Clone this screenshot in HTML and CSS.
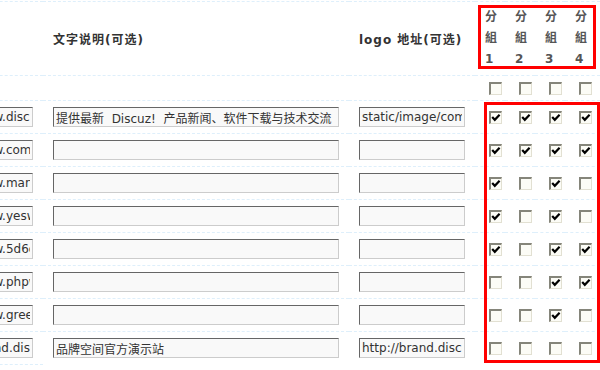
FILE: index.html
```html
<!DOCTYPE html>
<html lang="zh-CN">
<head>
  <meta charset="UTF-8">
  <meta name="viewport" content="width=device-width, initial-scale=1.0">
  <title>友情链接</title>
  <link rel="stylesheet" href="styles.css">
</head>
<body>
  <div class="page">
    <table class="tb">
      <tr class="head">
        <th></th>
        <th>文字说明(可选)</th>
        <th>logo 地址(可选)</th>
        <th class="grp">分<br>組<br>1</th>
        <th class="grp">分<br>組<br>2</th>
        <th class="grp">分<br>組<br>3</th>
        <th class="grp last">分<br>組<br>4</th>
      </tr>
      <tr class="all">
        <td></td><td></td><td></td>
        <td class="grp"><input type="checkbox" class="cb"></td>
        <td class="grp"><input type="checkbox" class="cb"></td>
        <td class="grp"><input type="checkbox" class="cb"></td>
        <td class="grp last"><input type="checkbox" class="cb"></td>
      </tr>
      <tr>
        <td><input class="txt url" value="http://www.discuz.net"></td>
        <td><input class="txt desc" value="提供最新  Discuz!  产品新闻、软件下载与技术交流"></td>
        <td><input class="txt logo" value="static/image/common/logo_88_31.gif"></td>
        <td class="grp"><input type="checkbox" class="cb" checked></td>
        <td class="grp"><input type="checkbox" class="cb" checked></td>
        <td class="grp"><input type="checkbox" class="cb" checked></td>
        <td class="grp last"><input type="checkbox" class="cb" checked></td>
      </tr>
      <tr>
        <td><input class="txt url" value="http://www.comsenz.com"></td>
        <td><input class="txt desc" value=""></td>
        <td><input class="txt logo" value=""></td>
        <td class="grp"><input type="checkbox" class="cb" checked></td>
        <td class="grp"><input type="checkbox" class="cb" checked></td>
        <td class="grp"><input type="checkbox" class="cb" checked></td>
        <td class="grp last"><input type="checkbox" class="cb" checked></td>
      </tr>
      <tr>
        <td><input class="txt url" value="http://www.manyou.com"></td>
        <td><input class="txt desc" value=""></td>
        <td><input class="txt logo" value=""></td>
        <td class="grp"><input type="checkbox" class="cb" checked></td>
        <td class="grp"><input type="checkbox" class="cb"></td>
        <td class="grp"><input type="checkbox" class="cb" checked></td>
        <td class="grp last"><input type="checkbox" class="cb"></td>
      </tr>
      <tr>
        <td><input class="txt url" value="http://www.yeswan.com"></td>
        <td><input class="txt desc" value=""></td>
        <td><input class="txt logo" value=""></td>
        <td class="grp"><input type="checkbox" class="cb" checked></td>
        <td class="grp"><input type="checkbox" class="cb"></td>
        <td class="grp"><input type="checkbox" class="cb" checked></td>
        <td class="grp last"><input type="checkbox" class="cb"></td>
      </tr>
      <tr>
        <td><input class="txt url" value="http://www.5d6d.com"></td>
        <td><input class="txt desc" value=""></td>
        <td><input class="txt logo" value=""></td>
        <td class="grp"><input type="checkbox" class="cb" checked></td>
        <td class="grp"><input type="checkbox" class="cb"></td>
        <td class="grp"><input type="checkbox" class="cb" checked></td>
        <td class="grp last"><input type="checkbox" class="cb" checked></td>
      </tr>
      <tr>
        <td><input class="txt url" value="http://www.phpwind.net"></td>
        <td><input class="txt desc" value=""></td>
        <td><input class="txt logo" value=""></td>
        <td class="grp"><input type="checkbox" class="cb"></td>
        <td class="grp"><input type="checkbox" class="cb"></td>
        <td class="grp"><input type="checkbox" class="cb" checked></td>
        <td class="grp last"><input type="checkbox" class="cb" checked></td>
      </tr>
      <tr>
        <td><input class="txt url" value="http://www.greenhat.cn"></td>
        <td><input class="txt desc" value=""></td>
        <td><input class="txt logo" value=""></td>
        <td class="grp"><input type="checkbox" class="cb"></td>
        <td class="grp"><input type="checkbox" class="cb"></td>
        <td class="grp"><input type="checkbox" class="cb" checked></td>
        <td class="grp last"><input type="checkbox" class="cb"></td>
      </tr>
      <tr>
        <td><input class="txt url" value="http://brand.discuz.net"></td>
        <td><input class="txt desc" value="品牌空间官方演示站"></td>
        <td><input class="txt logo" value="http://brand.discuz.net/static/logo.gif"></td>
        <td class="grp"><input type="checkbox" class="cb"></td>
        <td class="grp"><input type="checkbox" class="cb"></td>
        <td class="grp"><input type="checkbox" class="cb"></td>
        <td class="grp last"><input type="checkbox" class="cb"></td>
      </tr>
      <tr class="foot">
        <td></td><td class="none" colspan="6"></td>
      </tr>
    </table>

    <!-- red marks drawn over the shot -->
    <div class="mark mark-head"></div>
    <div class="mark mark-body"></div>
  </div>
</body>
</html>
```

FILE: styles.css
```css
body {
  margin: 0;
  background-color: #FFFFFF;
  font-family: 'DejaVu Sans', 'Noto Sans CJK SC', sans-serif;
  font-size: 12px;
  color: #333333;
}

.page {
  position: relative;
  width: 600px;
  height: 370px;
  overflow: hidden;
}

.tb {
  border-collapse: separate;
  border-spacing: 0;
  margin: 1px 0 0 -76px;
}

.tb th,
.tb td {
  border-top: 1px dashed #DEEFFB;
  padding: 6px 10px;
  text-align: left;
  vertical-align: middle;
}

.tb th {
  padding-top: 5px;
  padding-bottom: 5px;
  font-weight: bold;
  letter-spacing: 1px;
  white-space: nowrap;
  color: #333333;
}

.tb .grp {
  width: 20px;
  padding-left: 10px;
  padding-right: 0;
}

.tb .grp.last {
  padding-right: 5px;
}

.tb th.grp {
  line-height: 21px;
  letter-spacing: 0;
  color: #555555;
}

.tb .all td {
  padding-top: 6px;
  padding-bottom: 5px;
}

.tb .foot td {
  padding: 0;
  height: 6px;
}

.tb .foot td.none {
  border-top: none;
}

.txt {
  display: block;
  box-sizing: border-box;
  height: 20px;
  margin: 0;
  padding: 0 2px;
  border: 1px solid #CCCCCC;
  border-top-color: #666666;
  border-left-color: #666666;
  background-color: #F9F9F9;
  font-family: 'DejaVu Sans', 'Noto Sans CJK SC', sans-serif;
  font-size: 12px;
  color: #333333;
  outline: none;
}

.url { width: 99px; }
.desc { width: 286px; }
.logo { width: 106px; }

.cb {
  -webkit-appearance: none;
  appearance: none;
  display: block;
  box-sizing: border-box;
  width: 13px;
  height: 13px;
  margin: 0 0 0 4px;
  border-style: solid;
  border-width: 2px 1px 1px 2px;
  border-color: #85857A #E2E0D2 #E2E0D2 #85857A;
  background-color: #FCFCF6;
}

.cb:checked {
  background-image: url("data:image/svg+xml,%3Csvg xmlns='http://www.w3.org/2000/svg' width='10' height='10'%3E%3Cpolyline points='1.2,4 3.8,6.8 8.6,1.8' fill='none' stroke='%23000' stroke-width='2.2'/%3E%3C/svg%3E");
  background-repeat: no-repeat;
  background-position: 0 0;
}

.mark {
  position: absolute;
  box-sizing: border-box;
  border: 3px solid #FF0000;
}

.mark-head {
  left: 478px;
  top: 5px;
  width: 118px;
  height: 64px;
}

.mark-body {
  left: 484px;
  top: 102px;
  width: 116px;
  height: 261px;
}
```
